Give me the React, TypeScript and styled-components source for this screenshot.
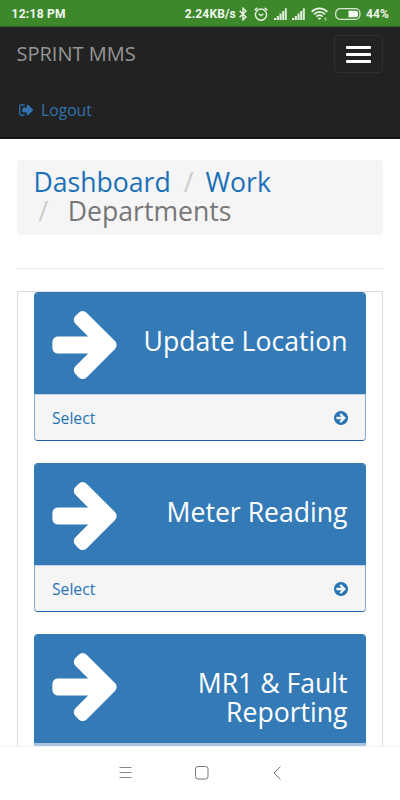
import React from "react";
import styled, { createGlobalStyle } from "styled-components";

const GlobalStyle = createGlobalStyle`
  * { box-sizing: border-box; }
  html, body { margin: 0; padding: 0; background: #fff; }
  body { font-family: "Open Sans", sans-serif; overflow: hidden; }
`;

const Screen = styled.div`
  display: flex;
  flex-direction: column;
  width: 400px;
  height: 800px;
  overflow: hidden;
  background: #fff;
`;

const StatusBar = styled.header`
  display: flex;
  flex: none;
  align-items: center;
  justify-content: space-between;
  height: 27px;
  padding: 0 11px 0 11.5px;
  background: #3e882c;
  border-bottom: 1px solid #2f6323;
  color: #f1f7ef;
  font: 700 12px/26px Roboto, sans-serif;
  white-space: nowrap;
`;

const Clock = styled.span`
  letter-spacing: 0.28px;
  padding-top: 1px;
`;

const StatusIcons = styled.div`
  display: flex;
  align-items: center;
  padding-top: 1px;
  svg { display: block; flex: none; }
`;

const Gap = styled.span<{ $w: number }>`
  width: ${(p) => p.$w}px;
`;

const Speed = styled.span`
  letter-spacing: 0.15px;
`;

const Percent = styled.span`
  letter-spacing: 0.15px;
`;

const Navbar = styled.nav`
  flex: none;
  height: 112px;
  background: #222;
  border-bottom: 2px solid #161616;
`;

const NavTop = styled.div`
  display: flex;
  justify-content: space-between;
  align-items: flex-start;
  padding: 8px 17px 0 16.5px;
`;

const Brand = styled.span`
  color: #969696;
  font-size: 20px;
  line-height: 38px;
`;

const MenuButton = styled.button`
  display: flex;
  flex-direction: column;
  align-items: center;
  justify-content: center;
  gap: 4px;
  width: 49px;
  height: 38px;
  padding: 0;
  background: transparent;
  border: 1px solid #303030;
  border-radius: 4px;
`;

const MenuLine = styled.span`
  width: 25px;
  height: 3px;
  border-radius: 1px;
  background: #fff;
`;

const Logout = styled.a`
  display: flex;
  align-items: center;
  gap: 8px;
  margin: 26px 0 0 19px;
  color: #3073ad;
  font-size: 15.7px;
  line-height: 22px;
`;

const Main = styled.main`
  flex: 1;
  min-height: 0;
  overflow: hidden;
  padding: 21px 17px 0;
`;

const Breadcrumb = styled.ol`
  display: flex;
  flex-wrap: wrap;
  align-content: flex-start;
  height: 75px;
  margin: 0;
  padding: 8px 16.5px;
  list-style: none;
  border-radius: 4px;
  background: #f5f5f5;
  font-size: 26.6px;
  line-height: 29px;
`;

const Crumb = styled.li<{ $active?: boolean; $wrap?: boolean }>`
  color: ${(p) => (p.$active ? "#777" : "#1a70b8")};
  ${(p) => p.$wrap && "flex-basis: 100%;"}
`;

const Slash = styled.span<{ $left: number; $right: number }>`
  color: #ccc;
  padding: 0 ${(p) => p.$right}px 0 ${(p) => p.$left}px;
`;

const Divider = styled.hr`
  height: 1px;
  margin: 33px 0 22px;
  border: 0;
  background: #ececec;
`;

const CardList = styled.section`
  display: flex;
  flex-direction: column;
  gap: 22px;
  padding: 0 16px;
  border: 1px solid #dedede;
  border-bottom: 0;
`;

const Card = styled.article`
  flex: none;
  overflow: hidden;
  width: 331.5px;
  border-top: 1px solid #337ab7;
  border-bottom: 1px solid #1c62aa;
  border-radius: 4px;
  background: #f5f5f5;
`;

const CardHead = styled.div<{ $tall?: boolean }>`
  display: flex;
  justify-content: space-between;
  height: ${(p) => (p.$tall ? 108 : 101)}px;
  padding: 18px 18px 0 18px;
  background: #337ab7;
  svg { display: block; flex: none; }
`;

const CardTitle = styled.h3`
  width: 220px;
  margin: 16px 0 0;
  color: #fff;
  font-size: 26.6px;
  font-weight: 400;
  line-height: 29px;
  text-align: right;
`;

const CardFoot = styled.a`
  display: flex;
  align-items: center;
  justify-content: space-between;
  height: 46px;
  padding: 0 17px;
  border: 1px solid #86a9d0;
  border-top-color: #c3d2e2;
  border-bottom: 0;
  border-radius: 0 0 3px 3px;
  background: #f5f5f5;
  color: #2874b5;
  font-size: 15.7px;
  line-height: 22px;
`;

const CardEdge = styled.div`
  height: 6px;
  background: #a9c3de;
`;

const SystemNav = styled.footer`
  display: flex;
  flex: none;
  align-items: center;
  height: 54px;
  padding: 0 0 1px 118.5px;
  gap: 63px;
  border-top: 1px solid #f3f3f3;
  background: #fff;
  svg { display: block; }
`;

const BluetoothIcon = () => (
  <svg width="8" height="14" viewBox="0 0 8 14" fill="none" stroke="#eaf4e7" strokeWidth="1.4">
    <path d="M.6 3.7 7 10 4 12.8V1.2L7 4 .6 10.3" />
  </svg>
);

const AlarmIcon = () => (
  <svg width="14" height="14" viewBox="0 0 14 14" fill="none" stroke="#eaf4e7" strokeWidth="1.4">
    <circle cx="7" cy="7.6" r="5.6" />
    <path d="M.6 3.2 3.3.9M13.4 3.2 10.7.9M4.7 6.8 7 8.7l2.4-1.9" />
  </svg>
);

const SignalIcon = () => (
  <svg width="13" height="12" viewBox="0 0 13 12" fill="#e0eedc">
    <path d="M0 10h2.2v2H0zM2.8 8h2.1v4H2.800zM5.500 5.500h2.100V12H5.500zM8.200 3h2.100v9H8.200zM10.900.3H12.800V12h-1.900z" />
  </svg>
);

const WifiIcon = () => (
  <svg width="17" height="14" viewBox="0 0 17 14" fill="none" stroke="#eaf4e7" strokeWidth="1.8">
    <path d="M.7 4.9C5.2.3 11.8.3 16.3 4.9M3 7.3c3.2-3.2 7.8-3.2 11 0M5.3 9.6c1.9-1.8 4.5-1.8 6.4 0" />
    <path d="M6.7 11.2q1.800-1.400 3.600 0L8.500 13z" fill="#eaf4e7" stroke="none" />
    <path d="M14.500 10.500v3" stroke="#9fc596" />
  </svg>
);

const BatteryIcon = () => (
  <svg width="26" height="12" viewBox="0 0 26 12">
    <rect x=".7" y=".7" width="24.2" height="10.6" rx="4.4" fill="none" stroke="#d6e8d1" strokeWidth="1.3" />
    <path d="M13.5 2.800h7.500q2 0 2 2v2.400q0 2-2 2h-7.500z" fill="#f4f9f2" />
  </svg>
);

const SignOutIcon = () => (
  <svg width="14" height="12" viewBox="64 256 1568 1280" fill="currentColor" stroke="currentColor" strokeWidth="40">
    <path d="M704 1440q0 4 1 20t.5 26.5-3 23.5-10 19.5-20.5 6.5h-320q-119 0-203.5-84.5t-84.5-203.5v-704q0-119 84.5-203.5t203.5-84.5h320q13 0 22.5 9.5t9.5 22.5q0 4 1 20t.5 26.5-3 23.5-10 19.5-20.5 6.5h-320q-66 0-113 47t-47 113v704q0 66 47 113t113 47h312l11.5 1 11.5 3 8 5.5 7 9 2 13.5zm928-544q0 26-19 45l-544 544q-19 19-45 19t-45-19-19-45v-288h-448q-26 0-45-19t-19-45v-384q0-26 19-45t45-19h448v-288q0-26 19-45t45-19 45 19l544 544q19 19 19 45z" />
  </svg>
);

const ArrowIcon = () => (
  <svg width="65" height="68" viewBox="128 181 1472 1558" fill="#fff">
    <path d="M1600 960q0 54-37 91l-651 651q-39 37-91 37-51 0-90-37l-75-75q-38-38-38-91t38-91l293-293h-704q-52 0-84.5-37.5t-32.5-90.5v-128q0-53 32.5-90.5t84.5-37.5h704l-293-294q-38-36-38-90t38-90l75-75q38-38 90-38 53 0 91 38l651 651q37 35 37 90z" />
  </svg>
);

const CircleArrowIcon = () => (
  <svg width="14" height="14" viewBox="128 128 1536 1536" fill="currentColor">
    <path d="M1413 896q0-27-18-45l-91-91-362-362q-18-18-45-18t-45 18l-91 91q-18 18-18 45t18 45l189 189h-502q-26 0-45 19t-19 45v128q0 26 19 45t45 19h502l-189 189q-19 19-19 45t19 45l91 91q18 18 45 18t45-18l362-362 91-91q18-18 18-45zm251 0q0 209-103 385.5t-279.5 279.5-385.5 103-385.5-103-279.5-279.5-103-385.5 103-385.5 279.5-279.5 385.5-103 385.5 103 279.5 279.5 103 385.5z" />
  </svg>
);

const departments = [
  { title: "Update Location" },
  { title: "Meter Reading" },
  { title: "MR1 & Fault Reporting", tall: true },
];

export default function App() {
  return (
    <>
      <GlobalStyle />
      <Screen>
        <StatusBar>
          <Clock>12:18 PM</Clock>
          <StatusIcons>
            <Speed>2.24KB/s</Speed>
            <Gap $w={3} />
            <BluetoothIcon />
            <Gap $w={7} />
            <AlarmIcon />
            <Gap $w={6} />
            <SignalIcon />
            <Gap $w={5} />
            <SignalIcon />
            <Gap $w={6} />
            <WifiIcon />
            <Gap $w={7} />
            <BatteryIcon />
            <Gap $w={5} />
            <Percent>44%</Percent>
          </StatusIcons>
        </StatusBar>
        <Navbar>
          <NavTop>
            <Brand>SPRINT MMS</Brand>
            <MenuButton aria-label="Menu">
              <MenuLine />
              <MenuLine />
              <MenuLine />
            </MenuButton>
          </NavTop>
          <Logout>
            <SignOutIcon />
            Logout
          </Logout>
        </Navbar>
        <Main>
          <Breadcrumb>
            <Crumb>Dashboard</Crumb>
            <Crumb>
              <Slash $left={13} $right={12}>/</Slash>
              Work
            </Crumb>
            <Crumb $active $wrap>
              <Slash $left={5} $right={19.5}>/</Slash>
              Departments
            </Crumb>
          </Breadcrumb>
          <Divider />
          <CardList>
            {departments.map((d) => (
              <Card key={d.title}>
                <CardHead $tall={d.tall}>
                  <ArrowIcon />
                  <CardTitle>{d.title}</CardTitle>
                </CardHead>
                {d.tall ? (
                  <CardEdge />
                ) : (
                  <CardFoot>
                    Select
                    <CircleArrowIcon />
                  </CardFoot>
                )}
              </Card>
            ))}
          </CardList>
        </Main>
        <SystemNav>
          <svg width="13" height="14" viewBox="0 0 13 14" stroke="#888" fill="none">
            <path d="M.5 1.5h12M.5 6.5h12M.5 11.5h12" />
          </svg>
          <svg width="14" height="14" viewBox="0 0 14 14" stroke="#777" fill="none">
            <rect x=".5" y=".5" width="12.5" height="12.5" rx="2.5" />
          </svg>
          <svg width="9" height="14" viewBox="0 0 9 14" stroke="#777" fill="none">
            <path d="M8.500.5 2 7l6.500 6.500" />
          </svg>
        </SystemNav>
      </Screen>
    </>
  );
}
